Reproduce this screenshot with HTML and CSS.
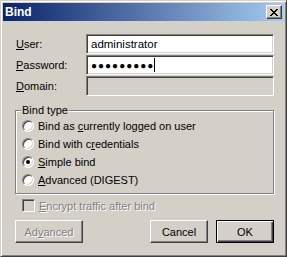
FILE: index.html
```html
<!DOCTYPE html>
<html lang="en">
<head>
    <meta charset="UTF-8">
    <title>Bind</title>
    <link rel="stylesheet" href="styles.css">
</head>
<body>
    <div class="window">
        <div class="title-bar">
            <span class="title">Bind</span>
            <span class="close-btn">
                <svg width="8" height="7" viewBox="0 0 8 7">
                    <path d="M0 0h2v1h1v1h2v-1h1v-1h2v1h-1v1h-1v1h-1v1h1v1h1v1h1v1h-2v-1h-1v-1h-2v1h-1v1h-2v-1h1v-1h1v-1h1v-1h-1v-1h-1v-1h-1z" fill="#000"/>
                </svg>
            </span>
        </div>

        <div class="content">
            <div class="form-grid">
                <label class="field-label"><u>U</u>ser:</label>
                <div class="input">administrator</div>

                <label class="field-label"><u>P</u>assword:</label>
                <div class="input password">&#9679;&#9679;&#9679;&#9679;&#9679;&#9679;&#9679;&#9679;&#9679;<span class="caret"></span></div>

                <label class="field-label"><u>D</u>omain:</label>
                <div class="input disabled"></div>
            </div>

            <fieldset class="group">
                <legend>Bind type</legend>
                <div class="radio-row"><span class="radio"></span><span>Bind as <u>c</u>urrently logged on user</span></div>
                <div class="radio-row"><span class="radio"></span><span>Bind with c<u>r</u>edentials</span></div>
                <div class="radio-row"><span class="radio checked"></span><span><u>S</u>imple bind</span></div>
                <div class="radio-row"><span class="radio"></span><span><u>A</u>dvanced (DIGEST)</span></div>
            </fieldset>

            <div class="check-row disabled-text">
                <span class="checkbox"></span><span><u>E</u>ncrypt traffic after bind</span>
            </div>

            <div class="button-row">
                <button class="btn btn-wide disabled-text">Ad<u>v</u>anced</button>
                <span class="spacer"></span>
                <button class="btn">Cancel</button>
                <button class="btn btn-default">OK</button>
            </div>
        </div>
    </div>
</body>
</html>
```

FILE: styles.css
```css
* {
    box-sizing: border-box;
}
body {
    margin: 0;
    font-family: 'Liberation Sans', Arial, sans-serif;
    font-size: 11px;
    color: #000;
    background: #d4d0c8;
}
u {
    text-decoration: underline;
    text-underline-offset: 1px;
}
.window {
    width: 287px;
    height: 257px;
    background: #d4d0c8;
    border: 1px solid;
    border-color: #d4d0c8 #404040 #404040 #d4d0c8;
    box-shadow: inset 1px 1px #fff, inset -1px -1px #808080;
    padding: 2px;
}
.title-bar {
    height: 18px;
    background: linear-gradient(to right, #0a246a, #a6caf0);
    display: flex;
    align-items: center;
    justify-content: space-between;
    padding: 0 2px 0 2px;
}
.title {
    color: #fff;
    font-weight: bold;
    font-size: 12px;
}
.close-btn {
    width: 16px;
    height: 14px;
    background: #d4d0c8;
    border: 1px solid;
    border-color: #fff #404040 #404040 #fff;
    box-shadow: inset -1px -1px #808080;
    display: flex;
    align-items: center;
    justify-content: center;
    padding-right: 1px;
}
.content {
    padding: 13px 10px 0 12px;
}
.form-grid {
    display: grid;
    grid-template-columns: 71px 1fr;
    grid-auto-rows: 20px;
    row-gap: 1px;
    align-items: center;
}
.field-label {
    padding-left: 1px;
}
.input {
    height: 20px;
    background: #fff;
    border: 1px solid;
    border-color: #808080 #fff #fff #808080;
    box-shadow: inset 1px 1px #404040, inset -1px -1px #d4d0c8;
    padding: 0 4px;
    display: flex;
    align-items: center;
    font-size: 11.5px;
}
.input.password {
    font-size: 10px;
    letter-spacing: 1px;
}
.caret {
    display: inline-block;
    width: 1px;
    height: 14px;
    background: #000;
}
.input.disabled {
    background: #d4d0c8;
}
.group {
    margin: 8px 0 0 0;
    padding: 0 0 4px 6px;
    border: 1px solid #808080;
    box-shadow: inset 1px 1px #fff, 1px 1px #fff;
    min-width: 0;
}
.group legend {
    padding: 0 1px;
    margin-left: -1px;
    line-height: 13px;
    background: #d4d0c8;
}
.radio-row {
    height: 18px;
    display: flex;
    align-items: center;
}
.radio {
    width: 12px;
    height: 12px;
    border-radius: 50%;
    border: 1px solid;
    border-color: #808080 #fff #fff #808080;
    box-shadow: inset 1px 1px #404040, inset -1px -1px #d4d0c8;
    background: #fff;
    margin-right: 4px;
    display: flex;
    align-items: center;
    justify-content: center;
}
.radio.checked::after {
    content: "";
    width: 4px;
    height: 4px;
    border-radius: 50%;
    background: #000;
}
.check-row {
    height: 17px;
    margin-top: 3px;
    padding-left: 7px;
    display: flex;
    align-items: center;
}
.checkbox {
    width: 13px;
    height: 13px;
    border: 1px solid;
    border-color: #808080 #fff #fff #808080;
    box-shadow: inset 1px 1px #404040, inset -1px -1px #d4d0c8;
    background: #d4d0c8;
    margin-right: 4px;
}
.disabled-text {
    color: #808080;
    text-shadow: 1px 1px #fff;
}
.button-row {
    display: flex;
    margin-top: 6px;
    gap: 8px;
}
.spacer {
    flex: 1;
}
.btn {
    width: 58px;
    height: 23px;
    font-family: inherit;
    font-size: 11px;
    background: #d4d0c8;
    border: 1px solid;
    border-color: #fff #404040 #404040 #fff;
    box-shadow: inset -1px -1px #808080;
    padding: 0;
    color: #000;
}
.btn-wide {
    width: 68px;
    color: #808080;
}
.btn-default {
    border: 1px solid #000;
    box-shadow: inset 1px 1px #fff, inset -1px -1px #404040, inset -2px -2px #808080;
}
```
